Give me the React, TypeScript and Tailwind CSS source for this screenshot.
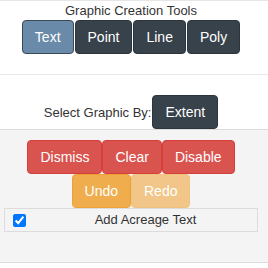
import React from "react";

/* ---------------- DATA ---------------- */

const drawTools = ["Text", "Point", "Line", "Poly"];
const actions = ["Dismiss", "Clear", "Disable"];

/* ---------------- COMPONENT ---------------- */

const App: React.FC = () => {
  return (
    <div className="w-[268px] h-[268px] bg-white font-['Liberation_Sans',Arial,sans-serif] text-[#333] overflow-hidden">
      {/* TOOLS */}
      <div className="border-t border-[#e6e6e6]">
        <div className="pr-[6px]">
          <div className="text-center text-[13px] leading-[19px]">
            Graphic Creation Tools
          </div>

          <div className="flex justify-center gap-px">
            {drawTools.map((t, i) => (
              <button
                key={t}
                className={`h-[34px] px-[12px] text-[14px] text-white rounded-[4px] border ${
                  i === 0
                    ? "bg-[#6a8aa9] border-[#3d4a55]"
                    : "bg-[#37424a] border-[#2c353b]"
                }`}
              >
                {t}
              </button>
            ))}
          </div>
        </div>

        <div className="mt-[20px] border-t border-[#e8e8e8]" />

        {/* SELECT BY */}
        <div className="pr-[6px] pt-[20px] flex justify-center items-baseline">
          <span className="text-[13px]">Select Graphic By:</span>
          <button className="ml-px h-[34px] px-[12px] text-[14px] text-white rounded-[4px] border bg-[#37424a] border-[#2c353b]">
            Extent
          </button>
        </div>
      </div>

      {/* ACTIONS PANEL */}
      <div className="h-[134px] bg-[#f4f4f4] border-t border-b border-[#dcdcdc]">
        <div className="pr-[6px] pt-[10px]">
          <div className="flex justify-center">
            {actions.map((a) => (
              <button
                key={a}
                className="h-[34px] px-[12px] text-[14px] text-white rounded-[4px] border bg-[#d9534f] border-[#d43f3a]"
              >
                {a}
              </button>
            ))}
          </div>

          <div className="flex justify-center">
            <button className="h-[34px] px-[12px] text-[14px] text-white rounded-[4px] border bg-[#f0ad4e] border-[#eea236]">
              Undo
            </button>
            <button className="h-[34px] px-[12px] text-[14px] text-white rounded-[4px] border bg-[#f1c688] border-[#f0c27f]">
              Redo
            </button>
          </div>

          <label className="mx-[4px] h-[24px] flex items-center border border-[#dcdcdc]">
            <input
              type="checkbox"
              defaultChecked
              className="ml-[8px] w-[13px] h-[13px] m-0"
            />
            <span className="flex-1 ml-[8px] text-center text-[13px]">
              Add Acreage Text
            </span>
          </label>
        </div>
      </div>
    </div>
  );
};

export default App;
